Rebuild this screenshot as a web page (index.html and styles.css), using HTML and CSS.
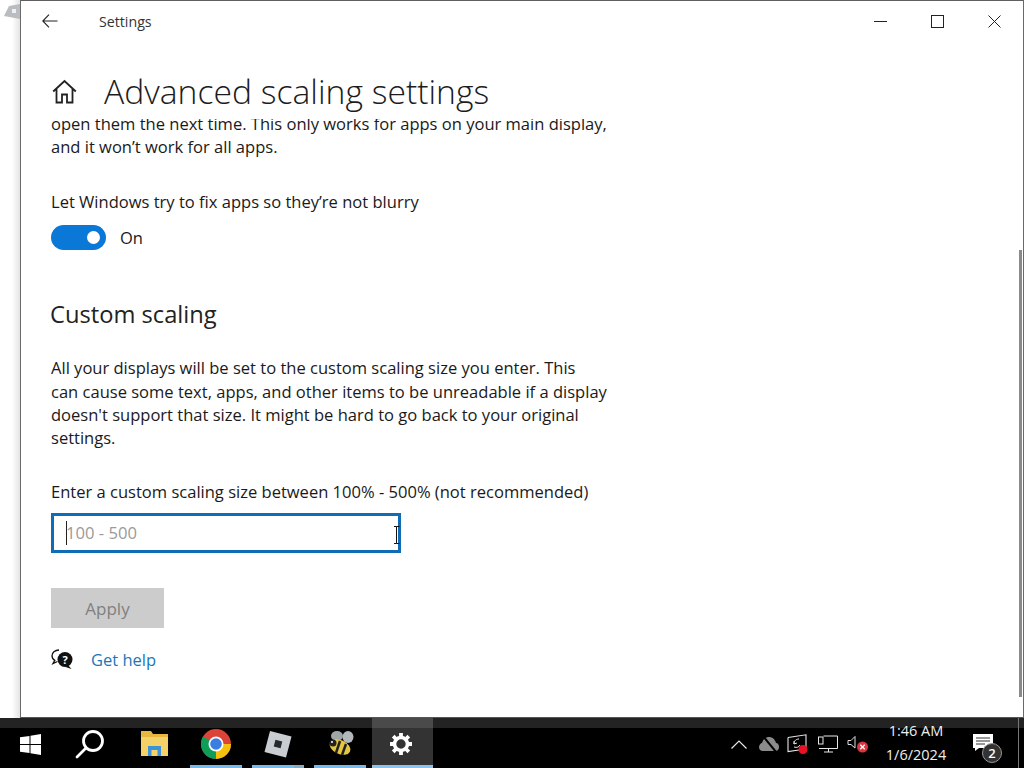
FILE: index.html
```html
<!DOCTYPE html>
<html lang="en">
<head>
<meta charset="utf-8">
<title>Settings</title>
<link rel="stylesheet" href="styles.css">
</head>
<body>
<div class="desktop">
  <aside class="wallpaper">
    <svg class="desk-icon" width="16" height="16" viewBox="0 0 16 16"><path d="M0 12 L5 2 L16 0 L16 15 Z" fill="#b9bcc0"/><rect x="8" y="5" width="4" height="4" fill="#eef0f2"/></svg>
  </aside>
  <main class="window">
    <header class="titlebar">
      <button class="back" aria-label="Back">
        <svg width="16" height="14" viewBox="0 0 16 14" fill="none" stroke="#222" stroke-width="1.1"><path d="M15.5 7H1M7 .7 .8 7 7 13.3"/></svg>
      </button>
      <span class="app-title">Settings</span>
      <div class="caption">
        <span class="cap-btn"><svg width="13" height="13" viewBox="0 0 13 13" stroke="#222" fill="none"><path d="M0 6.5H13"/></svg></span>
        <span class="cap-btn"><svg width="13" height="13" viewBox="0 0 13 13" stroke="#222" fill="none"><rect x=".5" y=".5" width="12" height="12"/></svg></span>
        <span class="cap-btn"><svg width="13" height="13" viewBox="0 0 13 13" stroke="#222" fill="none"><path d="M.5 .5 12.5 12.5M12.5 .5 .5 12.5"/></svg></span>
      </div>
    </header>
    <div class="page-head">
      <svg class="home" width="25" height="25" viewBox="0 0 25 25" fill="none" stroke="#222" stroke-width="1.8"><path d="M1.2 12.5 12.5 2 23.8 12.5M4.5 10V23.5H10V15.5H15V23.5H20.5V10"/></svg>
      <h1>Advanced scaling settings</h1>
    </div>
    <div class="scroller">
      <div class="content">
        <p class="intro">open them the next time. This only works for apps on your main display,<br>and it won’t work for all apps.</p>
        <p class="toggle-label">Let Windows try to fix apps so they’re not blurry</p>
        <div class="toggle-row">
          <span class="toggle"><span class="knob"></span></span>
          <span>On</span>
        </div>
        <h2>Custom scaling</h2>
        <p class="desc">All your displays will be set to the custom scaling size you enter. This<br>can cause some text, apps, and other items to be unreadable if a display<br>doesn't support that size. It might be hard to go back to your original<br>settings.</p>
        <p class="field-label">Enter a custom scaling size between 100% - 500% (not recommended)</p>
        <div class="input">
          <span class="caret"></span><span class="placeholder">100 - 500</span>
          <svg class="ibeam" width="6" height="18" viewBox="0 0 6 18" fill="none" stroke="#111"><path d="M0 .5H2.5V17.5H0M5.500 .5H2.500M5.500 17.500H2.500"/></svg>
        </div>
        <div class="apply">Apply</div>
        <div class="help">
          <svg width="22" height="21" viewBox="0 0 22 21"><path d="M8 1C3.800 1 1 3.600 1 6.800c0 2 1.100 3.600 2.800 4.600L2 14.500l4.500-2" fill="#fff" stroke="#111" stroke-width="1.300"/><circle cx="14" cy="10.500" r="7.500" fill="#111"/><path d="M17 16l3.500 4-6-2z" fill="#111"/><text x="14" y="14.800" class="help-q">?</text></svg>
          <a class="help-link">Get help</a>
        </div>
      </div>
      <div class="scrollbar"></div>
    </div>
  </main>
</div>
<footer class="taskbar">
  <div class="tile first"><svg width="21" height="21" viewBox="0 0 21 21" fill="#fff"><path d="M0 3.200 9.500 1.900V10H0ZM10.500 1.700 21 0V10H10.500ZM0 11H9.500V19.100L0 17.800ZM10.500 11H21V21L10.500 19.300Z"/></svg></div>
  <div class="tile search"><svg width="30" height="30" viewBox="0 0 30 30" fill="none" stroke="#fff" stroke-width="2.800"><circle cx="18" cy="12" r="9.500"/><path d="M11 19 2 28" stroke-linecap="round"/></svg></div>
  <div class="tile"><svg width="27" height="26" viewBox="0 0 27 26"><path d="M0 0H10L12 3H27V24H0Z" fill="#e8b73f"/><path d="M0 6H27V25H0Z" fill="#f5d268"/><path d="M7 25V15H20V25H16.500V19H10.500V25Z" fill="#3e93d8"/></svg></div>
  <div class="tile running"><svg width="30" height="30" viewBox="0 0 30 30"><circle cx="15" cy="15" r="15" fill="#db4437"/><path d="M15 15 2 7.500A15 15 0 0 0 15 30L22.500 28Z" fill="#0f9d58"/><path d="M15 15H30A15 15 0 0 1 15 30Z" fill="#f4c20d"/><circle cx="15" cy="15" r="7.500" fill="#fff"/><circle cx="15" cy="15" r="5.800" fill="#3b7de0"/></svg></div>
  <div class="tile running split"><svg width="28" height="28" viewBox="0 0 28 28"><path d="M6 1 27.500 6.500 22 27.500.5 22Z" fill="#c9ccd0"/><rect x="10.500" y="10.500" width="7" height="7" transform="rotate(14 14 14)" fill="#26282b"/></svg></div>
  <div class="tile running"><svg width="28" height="28" viewBox="0 0 28 28"><ellipse cx="11" cy="6" rx="6" ry="5" fill="#9fa6a8"/><ellipse cx="22" cy="7" rx="5.500" ry="6" fill="#b3b9ba"/><ellipse cx="14" cy="17" rx="11" ry="7" fill="#e3c740" transform="rotate(25 14 17)"/><path d="M14 11 10 23M20 14 16 25" stroke="#222" stroke-width="2.500"/><circle cx="7" cy="13" r="3.500" fill="#222"/><circle cx="6" cy="12" r="1" fill="#fff"/></svg></div>
  <div class="tile active"><svg width="24" height="24" viewBox="0 0 24 24" fill="none" stroke="#fff"><circle cx="12" cy="12" r="6.500" stroke-width="3.600"/><path stroke-width="3.800" d="M12 1V5M12 19V23M1 12H5M19 12H23M4.200 4.200 7 7M17 17 19.800 19.800M19.800 4.200 17 7M7 17 4.200 19.800"/></svg></div>
  <div class="tray">
    <span class="tray-icon"><svg width="16" height="9" viewBox="0 0 16 9" fill="none" stroke="#e8e8e8" stroke-width="1.200"><path d="M.5 8.500 8 1l7.500 7.500"/></svg></span>
    <span class="tray-icon"><svg width="20" height="16" viewBox="0 0 20 16"><path d="M4 15C1 15 0 13 0 11s2-4 3-4c1-4 4-6 7-6s6 2 7 6c2 0 3 2 3 4s-1 4-4 4Z" fill="#8b8b8b"/><path d="M4 0 17 16" stroke="#000" stroke-width="2"/></svg></span>
    <span class="tray-icon"><svg width="22" height="20" viewBox="0 0 22 20"><path d="M1 3.500 19 .8V13M1 3.500V17.500L12 16" fill="none" stroke="#e6e6e6" stroke-width="1.100"/><path d="M12 5C8 5 7 8 7 10M7 7l0 3 3-1M7 13c3 1 5 0 6-2" fill="none" stroke="#e6e6e6"/><circle cx="16" cy="15.500" r="4.500" fill="#e81224"/></svg></span>
    <span class="tray-icon"><svg width="20" height="18" viewBox="0 0 20 18" fill="none" stroke="#e8e8e8"><path d="M5.500 1H19.500V13.500H1M10.500 13.500V17M6 17H15"/><rect x=".5" y="2" width="4.500" height="7" stroke="#e8e8e8"/></svg></span>
    <span class="tray-icon"><svg width="21" height="18" viewBox="0 0 21 18"><path d="M1 5.500H4L8 1.500V13L4 9.500H1Z" fill="none" stroke="#e0e0e0"/><circle cx="15.500" cy="12" r="5.500" fill="#d9363e"/><path d="M13.300 9.800 17.700 14.200M17.700 9.800 13.300 14.200" stroke="#fff" stroke-width="1.300"/></svg></span>
  </div>
  <div class="clock"><span>1:46 AM</span><span>1/6/2024</span></div>
  <div class="notify">
    <svg width="20" height="17" viewBox="0 0 20 17"><path d="M0 0H20V14H6L2 17V14H0Z" fill="#fff"/><path d="M3 4H17M3 7H17M3 10H12" stroke="#333"/></svg>
    <span class="badge">2</span>
  </div>
  <div class="show-desktop"></div>
</footer>
</body>
</html>
```

FILE: styles.css
```css
* { box-sizing: border-box; }
html, body { margin: 0; height: 768px; overflow: hidden; }
body {
  display: flex;
  flex-direction: column;
  font-family: "Open Sans", "Noto Sans", sans-serif;
  color: #1a1a1a;
  background: #fff;
}
.desktop { display: flex; height: 718px; flex: none; }
.wallpaper {
  width: 20px;
  flex: none;
  background: linear-gradient(90deg, #fff 0, #fff 60%, #e4e4e4 100%);
  padding-top: 4px;
  padding-left: 4px;
}
.desk-icon { display: block; }
.window {
  flex: 1;
  display: flex;
  flex-direction: column;
  background: #fff;
  border-left: 1px solid #6a6a6a;
  border-right: 1px solid #6a6a6a;
  border-top: 1px solid #5f5f5f;
  border-bottom: 1px solid #555;
  min-width: 0;
}
.titlebar { display: flex; align-items: center; height: 40px; flex: none; }
.back {
  width: 78px;
  height: 40px;
  padding: 0 0 0 21px;
  border: 0;
  background: none;
  display: flex;
  align-items: center;
}
.app-title { font-size: 14.200px; color: #333; }
.caption { margin-left: auto; display: flex; }
.cap-btn { width: 57px; height: 40px; display: flex; align-items: center; justify-content: center; }
.page-head { display: flex; align-items: center; height: 78px; flex: none; padding-left: 31px; padding-top: 22px; }
.home { flex: none; margin-right: 28px; }
h1 { margin: 0; font-size: 33.700px; font-weight: 300; white-space: nowrap; line-height: 44px; color: #1c1c1c; margin-left: -1px; }
.scroller { flex: 1; position: relative; overflow: hidden; min-height: 0; }
.content { padding-left: 30px; width: 640px; font-size: 16.550px; line-height: 23.400px; }
p { margin: 0; white-space: nowrap; }
.intro { margin-top: -7px; }
.toggle-label { margin-top: 31px; }
.toggle-row { display: flex; align-items: center; gap: 14px; margin-top: 12px; height: 25px; }
.toggle { width: 55px; height: 25px; border-radius: 13px; background: #0a78d7; display: flex; align-items: center; justify-content: flex-end; padding-right: 6px; }
.knob { width: 13px; height: 13px; border-radius: 50%; background: #fff; }
h2 { margin: 48px 0 0; font-size: 23.700px; font-weight: 400; line-height: 32px; color: #222; height: 32px; margin-left: -1px; }
.desc { margin-top: 26px; }
.field-label { margin-top: 30px; }
.input {
  margin-top: 10px;
  width: 350px;
  height: 40px;
  border: 3px solid #0f6cb5;
  background: #fff;
  display: flex;
  align-items: center;
  padding-left: 12px;
  position: relative;
  font-size: 17px;
}
.caret { width: 1px; height: 24px; background: #222; flex: none; }
.placeholder { color: #9a9a9a; font-size: 16.600px; margin-left: -1px; padding-bottom: 2px; }
.ibeam { position: absolute; right: -2px; top: 10px; }
.apply {
  margin-top: 35px;
  width: 113px;
  height: 40px;
  background: #ccc;
  color: #808080;
  display: flex;
  align-items: center;
  justify-content: center;
  padding-top: 1px;
  font-size: 17px;
}
.help { display: flex; align-items: center; gap: 18px; margin-top: 19px; height: 24px; }
.help svg { flex: none; }
.help-q { font-size: 11px; font-weight: 700; fill: #fff; text-anchor: middle; }
.help-link { color: #1a77b8; font-size: 16.500px; }
.scrollbar { position: absolute; right: 1px; top: 131px; width: 3px; height: 447px; background: #8a8a8a; }
.taskbar {
  flex: none;
  height: 50px;
  display: flex;
  background: linear-gradient(#232323 0 10px, #000 10px);
  color: #eee;
}
.tile {
  width: 62px;
  flex: none;
  height: 50px;
  display: flex;
  align-items: center;
  justify-content: center;
  padding-top: 2px;
  position: relative;
}
.first { width: 61px; padding-top: 2px; }
.search { padding-right: 4px; }
.running::after {
  content: "";
  position: absolute;
  left: 5px;
  right: 5px;
  bottom: 0;
  height: 3px;
  background: #76b9ed;
}
.split::before {
  content: "";
  position: absolute;
  right: 5px;
  width: 10px;
  bottom: 0;
  height: 3px;
  background: #8aa9c2;
  z-index: 1;
}
.active { background: linear-gradient(#4a4a4a 0 10px, #333 10px); margin-left: 1px; width: 61px; padding-right: 3px; }
.active::after {
  content: "";
  position: absolute;
  left: 0;
  right: 0;
  bottom: 0;
  height: 3px;
  background: #8ac4ee;
}
.tray { margin-left: auto; display: flex; }
.tray-icon { width: 29.500px; display: flex; align-items: center; justify-content: center; padding-top: 2px; }
.clock { width: 88px; display: flex; flex-direction: column; align-items: center; justify-content: center; font-size: 14.500px; line-height: 24px; padding-top: 0; }
.notify { width: 58px; position: relative; display: flex; align-items: center; justify-content: center; padding-bottom: 2px; padding-right: 12px; }
.badge {
  position: absolute;
  left: 22px;
  top: 25px;
  width: 20px;
  height: 20px;
  border-radius: 50%;
  background: #333;
  border: 1px solid #999;
  color: #fff;
  font-size: 13px;
  line-height: 18px;
  text-align: center;
  font-weight: 600;
}
.show-desktop { width: 6px; border-left: 1px solid #777; }
```
